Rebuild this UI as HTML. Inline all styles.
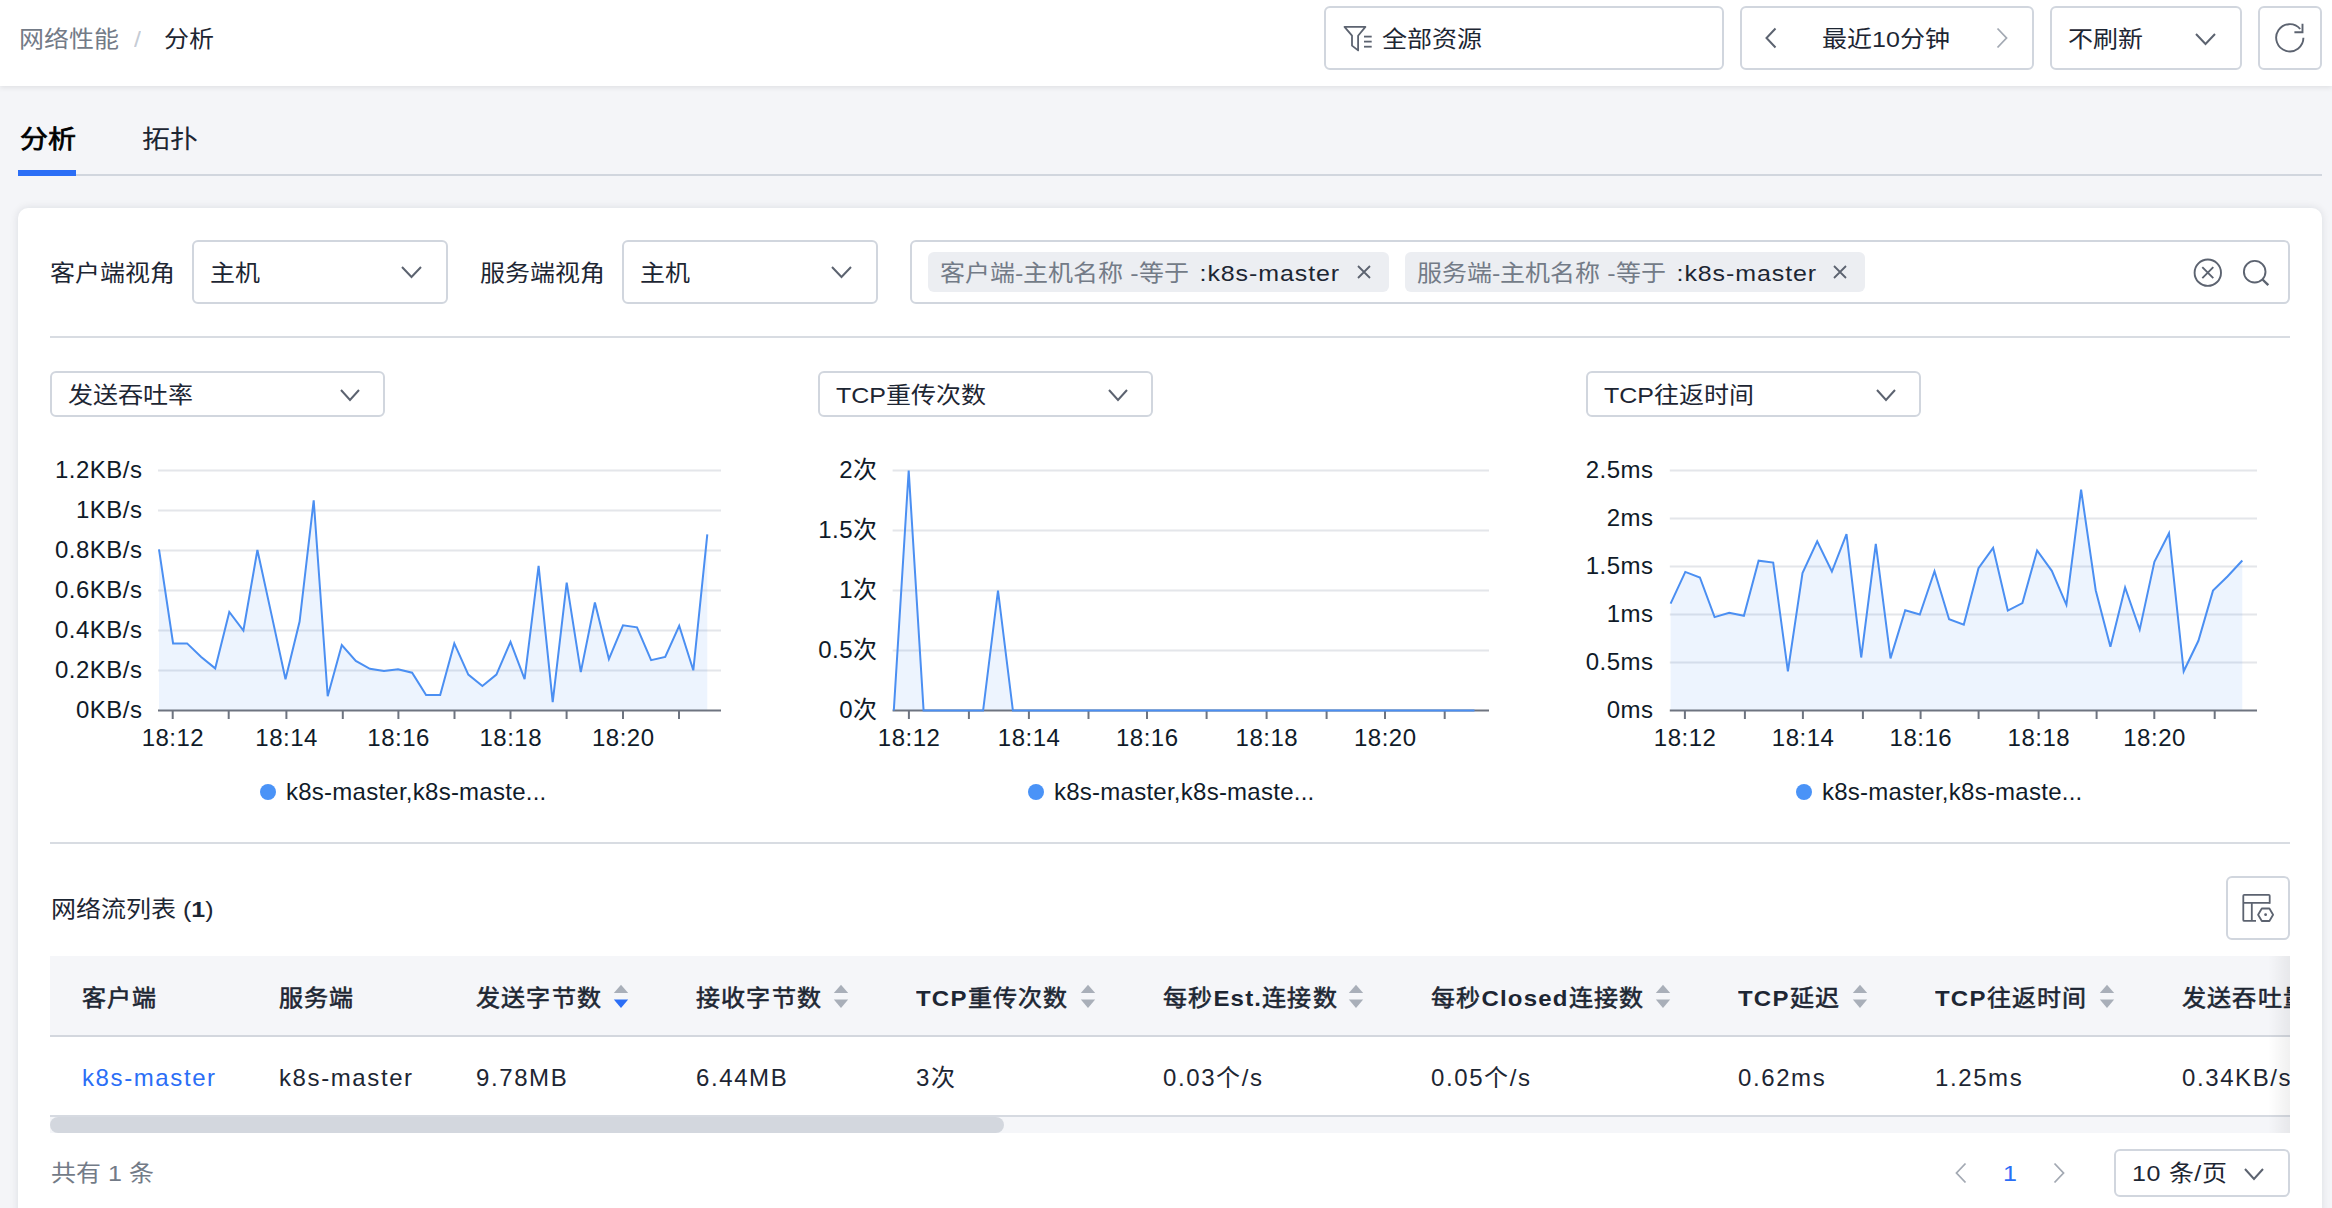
<!DOCTYPE html>
<html lang="zh-CN"><head><meta charset="utf-8">
<style>
*{box-sizing:border-box;margin:0;padding:0}
html,body{width:2332px;height:1208px;overflow:hidden;background:#f4f5f8;font-family:"Liberation Sans",sans-serif;color:#1d2633}
.abs{position:absolute}
.t{position:absolute;white-space:nowrap;font-size:25px;line-height:30px;transform:scaleY(0.91);transform-origin:50% 17px}
.box{position:absolute;border:2px solid #d1d6de;border-radius:6px;background:#fff}
.yl{position:absolute;white-space:nowrap;font-size:24px;line-height:30px;text-align:right;color:#101b29;letter-spacing:0.5px}
.xl{position:absolute;white-space:nowrap;font-size:24px;line-height:30px;width:120px;text-align:center;color:#101b29;letter-spacing:0.5px;text-indent:0.5px}
.lg{position:absolute;white-space:nowrap;font-size:24px;line-height:30px;color:#101b29;letter-spacing:0.25px}
.th b{-webkit-text-stroke:0}
.th{position:absolute;white-space:nowrap;font-size:24px;line-height:30px;font-weight:normal;-webkit-text-stroke:0.6px #1d2633;transform:scaleY(0.945);transform-origin:50% 26px;letter-spacing:1.2px;top:983px}
.td{position:absolute;white-space:nowrap;font-size:24px;line-height:30px;letter-spacing:1.6px;top:1063px}
</style></head><body>
<!-- header -->
<div class="abs" style="left:0;top:0;width:2332px;height:86px;background:#fff;box-shadow:0 2px 5px rgba(0,0,0,0.08)"></div>
<div class="t" style="left:19px;top:24px;color:#737b87">网络性能</div>
<div class="t" style="left:134px;top:24px;color:#c6ccd5">/</div>
<div class="t" style="left:164px;top:24px">分析</div>

<div class="box" style="left:1324px;top:6px;width:400px;height:64px"></div>
<svg class="abs" style="left:1340px;top:22px" width="36" height="32" viewBox="0 0 36 32">
<path d="M4.5 4.9 L25.4 4.9 L18.1 13.7 L18.1 28.4 L12 23.6 L12 13.7 Z" fill="none" stroke="#5c6370" stroke-width="1.8" stroke-linejoin="round"/>
<line x1="24" y1="14.6" x2="31.7" y2="14.6" stroke="#5c6370" stroke-width="1.8"/>
<line x1="24" y1="19.6" x2="31.7" y2="19.6" stroke="#5c6370" stroke-width="1.8"/>
<line x1="24" y1="24.7" x2="31.7" y2="24.7" stroke="#5c6370" stroke-width="1.8"/>
</svg>
<div class="t" style="left:1382px;top:24px">全部资源</div>

<div class="box" style="left:1740px;top:6px;width:294px;height:64px"></div>
<svg class="abs" style="left:1764px;top:27px" width="14" height="22" viewBox="0 0 14 22"><path d="M11.5 1.5 L2.5 11 L11.5 20.5" fill="none" stroke="#5c6370" stroke-width="2"/></svg>
<div class="t" style="left:1822px;top:24px">最近10分钟</div>
<svg class="abs" style="left:1995px;top:27px" width="14" height="22" viewBox="0 0 14 22"><path d="M2.5 1.5 L11.5 11 L2.5 20.5" fill="none" stroke="#a3a9b3" stroke-width="1.8"/></svg>

<div class="box" style="left:2050px;top:6px;width:192px;height:64px"></div>
<div class="t" style="left:2068px;top:24px">不刷新</div>
<svg class="abs" style="left:2194px;top:32px" width="23" height="14" viewBox="0 0 23 14"><path d="M2 2 L11.5 12 L21 2" fill="none" stroke="#5c6370" stroke-width="2"/></svg>

<div class="box" style="left:2258px;top:6px;width:64px;height:64px"></div>
<svg class="abs" style="left:2272px;top:22px" width="36" height="34" viewBox="0 0 36 34">
<path d="M31.4 15.7 A13.6 13.6 0 1 1 28.2 7.0" fill="none" stroke="#5c6370" stroke-width="1.9"/>
<path d="M22.4 10.2 L30.5 10.2 L30.5 1.8" fill="none" stroke="#5c6370" stroke-width="1.9"/>
</svg>

<!-- tabs -->
<div class="t" style="left:19.5px;top:125px;font-size:28px;line-height:30px;-webkit-text-stroke:0.8px #000;color:#000">分析</div>
<div class="t" style="left:141.5px;top:125px;font-size:28px;line-height:30px">拓扑</div>
<div class="abs" style="left:18px;top:174px;width:2304px;height:2px;background:#d1d6de"></div>
<div class="abs" style="left:18px;top:170px;width:58px;height:6px;background:#2b6ef6"></div>

<!-- card -->
<div class="abs" style="left:18px;top:208px;width:2304px;height:1100px;background:#fff;border-radius:10px;box-shadow:0 0 9px rgba(20,30,50,0.11)"></div>

<div class="t" style="left:50px;top:258px">客户端视角</div>
<div class="box" style="left:192px;top:240px;width:256px;height:64px"></div>
<div class="t" style="left:210px;top:258px">主机</div>
<svg class="abs" style="left:400px;top:265px" width="23" height="14" viewBox="0 0 23 14"><path d="M2 2 L11.5 12 L21 2" fill="none" stroke="#5c6370" stroke-width="2"/></svg>

<div class="t" style="left:480px;top:258px">服务端视角</div>
<div class="box" style="left:622px;top:240px;width:256px;height:64px"></div>
<div class="t" style="left:640px;top:258px">主机</div>
<svg class="abs" style="left:830px;top:265px" width="23" height="14" viewBox="0 0 23 14"><path d="M2 2 L11.5 12 L21 2" fill="none" stroke="#5c6370" stroke-width="2"/></svg>

<div class="box" style="left:910px;top:240px;width:1380px;height:64px"></div>
<div class="abs" style="left:928px;top:252px;width:461px;height:40px;background:#eceef2;border-radius:6px"></div>
<div class="t" style="left:940px;top:258px;color:#737b87">客户端-主机名称 -等于 <span style="color:#1d2633;letter-spacing:0.9px;margin-left:4px">:k8s-master</span></div>
<svg class="abs" style="left:1356px;top:264px" width="16" height="16" viewBox="0 0 16 16"><path d="M2 2 L14 14 M14 2 L2 14" stroke="#5c6370" stroke-width="1.8"/></svg>
<div class="abs" style="left:1405px;top:252px;width:460px;height:40px;background:#eceef2;border-radius:6px"></div>
<div class="t" style="left:1417px;top:258px;color:#737b87">服务端-主机名称 -等于 <span style="color:#1d2633;letter-spacing:0.9px;margin-left:4px">:k8s-master</span></div>
<svg class="abs" style="left:1832px;top:264px" width="16" height="16" viewBox="0 0 16 16"><path d="M2 2 L14 14 M14 2 L2 14" stroke="#5c6370" stroke-width="1.8"/></svg>
<svg class="abs" style="left:2190px;top:255px" width="36" height="36" viewBox="0 0 36 36">
<circle cx="17.8" cy="17.7" r="13.2" fill="none" stroke="#5c6370" stroke-width="1.9"/>
<path d="M12.3 12.2 L23.3 23.2 M23.3 12.2 L12.3 23.2" stroke="#5c6370" stroke-width="1.9"/></svg>
<svg class="abs" style="left:2236px;top:254px" width="40" height="40" viewBox="0 0 40 40">
<circle cx="18.7" cy="17.7" r="10.8" fill="none" stroke="#5c6370" stroke-width="1.9"/>
<path d="M26.5 25.5 L32.3 31.2" stroke="#5c6370" stroke-width="2.4"/></svg>

<div class="abs" style="left:50px;top:336px;width:2240px;height:2px;background:#d8dce2"></div>

<!-- chart selects -->
<div class="box" style="left:50px;top:371px;width:335px;height:46px"></div>
<div class="t" style="left:68px;top:380px">发送吞吐率</div>
<svg class="abs" style="left:339px;top:388px" width="22" height="14" viewBox="0 0 22 14"><path d="M2 2 L11.0 12 L20 2" fill="none" stroke="#5c6370" stroke-width="2"/></svg>
<div class="box" style="left:818px;top:371px;width:335px;height:46px"></div>
<div class="t" style="left:836px;top:380px">TCP重传次数</div>
<svg class="abs" style="left:1107px;top:388px" width="22" height="14" viewBox="0 0 22 14"><path d="M2 2 L11.0 12 L20 2" fill="none" stroke="#5c6370" stroke-width="2"/></svg>
<div class="box" style="left:1586px;top:371px;width:335px;height:46px"></div>
<div class="t" style="left:1604px;top:380px">TCP往返时间</div>
<svg class="abs" style="left:1875px;top:388px" width="22" height="14" viewBox="0 0 22 14"><path d="M2 2 L11.0 12 L20 2" fill="none" stroke="#5c6370" stroke-width="2"/></svg>

<svg class="abs" style="left:0;top:0" width="2332" height="1208" viewBox="0 0 2332 1208">
<line x1="158" y1="470.5" x2="721" y2="470.5" stroke="#e4e6ea" stroke-width="2"/>
<line x1="158" y1="510.5" x2="721" y2="510.5" stroke="#e4e6ea" stroke-width="2"/>
<line x1="158" y1="550.5" x2="721" y2="550.5" stroke="#e4e6ea" stroke-width="2"/>
<line x1="158" y1="590.5" x2="721" y2="590.5" stroke="#e4e6ea" stroke-width="2"/>
<line x1="158" y1="630.5" x2="721" y2="630.5" stroke="#e4e6ea" stroke-width="2"/>
<line x1="158" y1="670.5" x2="721" y2="670.5" stroke="#e4e6ea" stroke-width="2"/>
<path d="M159.0,710 L159.0,549.3 L173.1,643.4 L187.1,643.4 L201.2,657.0 L215.2,668.4 L229.3,612.0 L243.4,630.5 L257.4,550.0 L271.5,614.6 L285.5,679.2 L299.6,621.5 L313.7,500.3 L327.7,696.2 L341.8,645.1 L355.8,660.9 L369.9,668.8 L384.0,671.0 L398.0,669.3 L412.1,672.7 L426.1,695.1 L440.2,695.1 L454.3,643.4 L468.3,674.6 L482.4,686.0 L496.4,674.6 L510.5,641.9 L524.6,679.2 L538.6,565.9 L552.7,702.2 L566.7,582.7 L580.8,672.1 L594.9,602.5 L608.9,659.1 L623.0,625.3 L637.0,627.3 L651.1,660.2 L665.2,657.0 L679.2,625.8 L693.3,670.3 L707.3,534.3 L707.3,710 Z" fill="#4b8ff2" fill-opacity="0.1" stroke="none"/>
<line x1="158" y1="710.5" x2="721" y2="710.5" stroke="#6e7480" stroke-width="2"/>
<line x1="172.7" y1="710" x2="172.7" y2="719" stroke="#6e7480" stroke-width="2"/>
<line x1="228.7" y1="710" x2="228.7" y2="719" stroke="#6e7480" stroke-width="2"/>
<line x1="286.4" y1="710" x2="286.4" y2="719" stroke="#6e7480" stroke-width="2"/>
<line x1="342.8" y1="710" x2="342.8" y2="719" stroke="#6e7480" stroke-width="2"/>
<line x1="398.4" y1="710" x2="398.4" y2="719" stroke="#6e7480" stroke-width="2"/>
<line x1="454.5" y1="710" x2="454.5" y2="719" stroke="#6e7480" stroke-width="2"/>
<line x1="510.5" y1="710" x2="510.5" y2="719" stroke="#6e7480" stroke-width="2"/>
<line x1="566.6" y1="710" x2="566.6" y2="719" stroke="#6e7480" stroke-width="2"/>
<line x1="623" y1="710" x2="623" y2="719" stroke="#6e7480" stroke-width="2"/>
<line x1="679" y1="710" x2="679" y2="719" stroke="#6e7480" stroke-width="2"/>
<path d="M159.0,549.3 L173.1,643.4 L187.1,643.4 L201.2,657.0 L215.2,668.4 L229.3,612.0 L243.4,630.5 L257.4,550.0 L271.5,614.6 L285.5,679.2 L299.6,621.5 L313.7,500.3 L327.7,696.2 L341.8,645.1 L355.8,660.9 L369.9,668.8 L384.0,671.0 L398.0,669.3 L412.1,672.7 L426.1,695.1 L440.2,695.1 L454.3,643.4 L468.3,674.6 L482.4,686.0 L496.4,674.6 L510.5,641.9 L524.6,679.2 L538.6,565.9 L552.7,702.2 L566.7,582.7 L580.8,672.1 L594.9,602.5 L608.9,659.1 L623.0,625.3 L637.0,627.3 L651.1,660.2 L665.2,657.0 L679.2,625.8 L693.3,670.3 L707.3,534.3" fill="none" stroke="#4b8ff2" stroke-width="2" stroke-linejoin="miter" stroke-miterlimit="4"/>
<line x1="892.6" y1="470.5" x2="1489" y2="470.5" stroke="#e4e6ea" stroke-width="2"/>
<line x1="892.6" y1="530.5" x2="1489" y2="530.5" stroke="#e4e6ea" stroke-width="2"/>
<line x1="892.6" y1="590.5" x2="1489" y2="590.5" stroke="#e4e6ea" stroke-width="2"/>
<line x1="892.6" y1="650.5" x2="1489" y2="650.5" stroke="#e4e6ea" stroke-width="2"/>
<path d="M893.8,710 L893.8,710.5 L908.7,470.5 L923.6,710.5 L938.5,710.5 L953.4,710.5 L968.2,710.5 L983.1,710.5 L998.0,590.5 L1012.9,710.5 L1027.8,710.5 L1042.7,710.5 L1057.6,710.5 L1072.5,710.5 L1087.4,710.5 L1102.3,710.5 L1117.2,710.5 L1132.0,710.5 L1146.9,710.5 L1161.8,710.5 L1176.7,710.5 L1191.6,710.5 L1206.5,710.5 L1221.4,710.5 L1236.3,710.5 L1251.2,710.5 L1266.0,710.5 L1280.9,710.5 L1295.8,710.5 L1310.7,710.5 L1325.6,710.5 L1340.5,710.5 L1355.4,710.5 L1370.3,710.5 L1385.2,710.5 L1400.1,710.5 L1414.9,710.5 L1429.8,710.5 L1444.7,710.5 L1459.6,710.5 L1474.5,710.5 L1474.5,710 Z" fill="#4b8ff2" fill-opacity="0.1" stroke="none"/>
<line x1="892.6" y1="710.5" x2="1489" y2="710.5" stroke="#6e7480" stroke-width="2"/>
<line x1="908.9" y1="710" x2="908.9" y2="719" stroke="#6e7480" stroke-width="2"/>
<line x1="968.9" y1="710" x2="968.9" y2="719" stroke="#6e7480" stroke-width="2"/>
<line x1="1028.9" y1="710" x2="1028.9" y2="719" stroke="#6e7480" stroke-width="2"/>
<line x1="1088.5" y1="710" x2="1088.5" y2="719" stroke="#6e7480" stroke-width="2"/>
<line x1="1147" y1="710" x2="1147" y2="719" stroke="#6e7480" stroke-width="2"/>
<line x1="1206.6" y1="710" x2="1206.6" y2="719" stroke="#6e7480" stroke-width="2"/>
<line x1="1266.6" y1="710" x2="1266.6" y2="719" stroke="#6e7480" stroke-width="2"/>
<line x1="1326.6" y1="710" x2="1326.6" y2="719" stroke="#6e7480" stroke-width="2"/>
<line x1="1385" y1="710" x2="1385" y2="719" stroke="#6e7480" stroke-width="2"/>
<line x1="1444.7" y1="710" x2="1444.7" y2="719" stroke="#6e7480" stroke-width="2"/>
<path d="M893.8,710.5 L908.7,470.5 L923.6,710.5 L938.5,710.5 L953.4,710.5 L968.2,710.5 L983.1,710.5 L998.0,590.5 L1012.9,710.5 L1027.8,710.5 L1042.7,710.5 L1057.6,710.5 L1072.5,710.5 L1087.4,710.5 L1102.3,710.5 L1117.2,710.5 L1132.0,710.5 L1146.9,710.5 L1161.8,710.5 L1176.7,710.5 L1191.6,710.5 L1206.5,710.5 L1221.4,710.5 L1236.3,710.5 L1251.2,710.5 L1266.0,710.5 L1280.9,710.5 L1295.8,710.5 L1310.7,710.5 L1325.6,710.5 L1340.5,710.5 L1355.4,710.5 L1370.3,710.5 L1385.2,710.5 L1400.1,710.5 L1414.9,710.5 L1429.8,710.5 L1444.7,710.5 L1459.6,710.5 L1474.5,710.5" fill="none" stroke="#4b8ff2" stroke-width="2" stroke-linejoin="miter" stroke-miterlimit="4"/>
<line x1="1669.8" y1="470.5" x2="2257" y2="470.5" stroke="#e4e6ea" stroke-width="2"/>
<line x1="1669.8" y1="518.5" x2="2257" y2="518.5" stroke="#e4e6ea" stroke-width="2"/>
<line x1="1669.8" y1="566.5" x2="2257" y2="566.5" stroke="#e4e6ea" stroke-width="2"/>
<line x1="1669.8" y1="614.5" x2="2257" y2="614.5" stroke="#e4e6ea" stroke-width="2"/>
<line x1="1669.8" y1="662.5" x2="2257" y2="662.5" stroke="#e4e6ea" stroke-width="2"/>
<path d="M1670.6,710 L1670.6,603.7 L1685.3,571.9 L1699.9,577.5 L1714.6,617.1 L1729.2,612.8 L1743.9,615.8 L1758.6,560.7 L1773.2,562.6 L1787.9,671.3 L1802.5,573.0 L1817.2,541.3 L1831.9,571.5 L1846.5,534.2 L1861.2,657.5 L1875.8,543.9 L1890.5,658.4 L1905.2,610.2 L1919.8,614.5 L1934.5,571.3 L1949.1,619.2 L1963.8,624.6 L1978.5,568.2 L1993.1,547.8 L2007.8,610.6 L2022.4,603.1 L2037.1,550.4 L2051.8,570.8 L2066.4,604.8 L2081.1,489.7 L2095.7,590.2 L2110.4,646.8 L2125.1,587.4 L2139.7,629.6 L2154.4,561.8 L2169.0,533.2 L2183.7,671.3 L2198.4,640.8 L2213.0,590.6 L2227.7,576.2 L2242.3,560.5 L2242.3,710 Z" fill="#4b8ff2" fill-opacity="0.1" stroke="none"/>
<line x1="1669.8" y1="710.5" x2="2257" y2="710.5" stroke="#6e7480" stroke-width="2"/>
<line x1="1684.9" y1="710" x2="1684.9" y2="719" stroke="#6e7480" stroke-width="2"/>
<line x1="1744.9" y1="710" x2="1744.9" y2="719" stroke="#6e7480" stroke-width="2"/>
<line x1="1802.9" y1="710" x2="1802.9" y2="719" stroke="#6e7480" stroke-width="2"/>
<line x1="1862.9" y1="710" x2="1862.9" y2="719" stroke="#6e7480" stroke-width="2"/>
<line x1="1920.6" y1="710" x2="1920.6" y2="719" stroke="#6e7480" stroke-width="2"/>
<line x1="1978.6" y1="710" x2="1978.6" y2="719" stroke="#6e7480" stroke-width="2"/>
<line x1="2038.6" y1="710" x2="2038.6" y2="719" stroke="#6e7480" stroke-width="2"/>
<line x1="2096.6" y1="710" x2="2096.6" y2="719" stroke="#6e7480" stroke-width="2"/>
<line x1="2154.3" y1="710" x2="2154.3" y2="719" stroke="#6e7480" stroke-width="2"/>
<line x1="2214.7" y1="710" x2="2214.7" y2="719" stroke="#6e7480" stroke-width="2"/>
<path d="M1670.6,603.7 L1685.3,571.9 L1699.9,577.5 L1714.6,617.1 L1729.2,612.8 L1743.9,615.8 L1758.6,560.7 L1773.2,562.6 L1787.9,671.3 L1802.5,573.0 L1817.2,541.3 L1831.9,571.5 L1846.5,534.2 L1861.2,657.5 L1875.8,543.9 L1890.5,658.4 L1905.2,610.2 L1919.8,614.5 L1934.5,571.3 L1949.1,619.2 L1963.8,624.6 L1978.5,568.2 L1993.1,547.8 L2007.8,610.6 L2022.4,603.1 L2037.1,550.4 L2051.8,570.8 L2066.4,604.8 L2081.1,489.7 L2095.7,590.2 L2110.4,646.8 L2125.1,587.4 L2139.7,629.6 L2154.4,561.8 L2169.0,533.2 L2183.7,671.3 L2198.4,640.8 L2213.0,590.6 L2227.7,576.2 L2242.3,560.5" fill="none" stroke="#4b8ff2" stroke-width="2" stroke-linejoin="miter" stroke-miterlimit="4"/>
<circle cx="268" cy="792" r="8" fill="#4a93f7"/>
<circle cx="1036" cy="792" r="8" fill="#4a93f7"/>
<circle cx="1804" cy="792" r="8" fill="#4a93f7"/>
</svg>
<div class="yl" style="right:2189.5px;top:454.5px">1.2KB/s</div>
<div class="yl" style="right:2189.5px;top:494.5px">1KB/s</div>
<div class="yl" style="right:2189.5px;top:534.5px">0.8KB/s</div>
<div class="yl" style="right:2189.5px;top:574.5px">0.6KB/s</div>
<div class="yl" style="right:2189.5px;top:614.5px">0.4KB/s</div>
<div class="yl" style="right:2189.5px;top:654.5px">0.2KB/s</div>
<div class="yl" style="right:2189.5px;top:694.5px">0KB/s</div><div class="yl" style="right:1454.5px;top:454.5px">2次</div>
<div class="yl" style="right:1454.5px;top:514.5px">1.5次</div>
<div class="yl" style="right:1454.5px;top:574.5px">1次</div>
<div class="yl" style="right:1454.5px;top:634.5px">0.5次</div>
<div class="yl" style="right:1454.5px;top:694.5px">0次</div><div class="yl" style="right:678.5px;top:454.5px">2.5ms</div>
<div class="yl" style="right:678.5px;top:502.5px">2ms</div>
<div class="yl" style="right:678.5px;top:550.5px">1.5ms</div>
<div class="yl" style="right:678.5px;top:598.5px">1ms</div>
<div class="yl" style="right:678.5px;top:646.5px">0.5ms</div>
<div class="yl" style="right:678.5px;top:694.5px">0ms</div>
<div class="xl" style="left:112.69999999999999px;top:723px">18:12</div>
<div class="xl" style="left:226.39999999999998px;top:723px">18:14</div>
<div class="xl" style="left:338.4px;top:723px">18:16</div>
<div class="xl" style="left:450.5px;top:723px">18:18</div>
<div class="xl" style="left:563px;top:723px">18:20</div><div class="xl" style="left:848.9px;top:723px">18:12</div>
<div class="xl" style="left:968.9000000000001px;top:723px">18:14</div>
<div class="xl" style="left:1087px;top:723px">18:16</div>
<div class="xl" style="left:1206.6px;top:723px">18:18</div>
<div class="xl" style="left:1325px;top:723px">18:20</div><div class="xl" style="left:1624.9px;top:723px">18:12</div>
<div class="xl" style="left:1742.9px;top:723px">18:14</div>
<div class="xl" style="left:1860.6px;top:723px">18:16</div>
<div class="xl" style="left:1978.6px;top:723px">18:18</div>
<div class="xl" style="left:2094.3px;top:723px">18:20</div>
<div class="lg" style="left:286px;top:777px">k8s-master,k8s-maste...</div>
<div class="lg" style="left:1054px;top:777px">k8s-master,k8s-maste...</div>
<div class="lg" style="left:1822px;top:777px">k8s-master,k8s-maste...</div>

<div class="abs" style="left:50px;top:842px;width:2240px;height:2px;background:#d8dce2"></div>

<!-- table -->
<div class="t" style="left:51px;top:894px">网络流列表 (<b>1</b>)</div>
<div class="box" style="left:2226px;top:876px;width:64px;height:64px"></div>
<svg class="abs" style="left:2236px;top:886px" width="44" height="44" viewBox="0 0 44 44">
<path d="M20 34.9 L8.3 34.9 Q7.3 34.9 7.3 33.9 L7.3 9.8 Q7.3 8.8 8.3 8.8 L32.7 8.8 Q33.7 8.8 33.7 9.8 L33.7 17.8" fill="none" stroke="#5c6370" stroke-width="1.8"/>
<path d="M7.3 16.9 L33.7 16.9 M15.8 16.9 L15.8 34.9" fill="none" stroke="#5c6370" stroke-width="1.8"/>
<path d="M25.8 22.5 L33.4 22.5 L37.1 28.7 L33.4 35 L25.8 35 L22.1 28.7 Z" fill="none" stroke="#5c6370" stroke-width="1.8" stroke-linejoin="round"/>
<circle cx="29.6" cy="28.7" r="1.4" fill="#5c6370"/>
</svg>
<div class="abs" style="left:50px;top:956px;width:2240px;height:81px;background:#f5f6f9;border-bottom:2px solid #d3d7de"></div>
<div class="abs" style="left:50px;top:1037px;width:2240px;height:80px;background:#fff;border-bottom:2px solid #d6dae1"></div>
<div class="abs" style="left:50px;top:1117px;width:2240px;height:16px;background:#f5f6f9"></div>
<div class="abs" style="left:50px;top:1117px;width:954px;height:16px;background:#d3d7de;border-radius:8px"></div>

<div class="th" style="left:82px">客户端</div>
<div class="th" style="left:279px">服务端</div>
<div class="th" style="left:476px">发送字节数</div><svg class="abs" style="left:613px;top:984px" width="16" height="26" viewBox="0 0 16 26"><path d="M8 0.8 L15.2 9 L0.8 9 Z" fill="#a9afb9"/><path d="M0.8 15.5 L15.2 15.5 L8 24 Z" fill="#2b6ef6"/></svg>
<div class="th" style="left:696px">接收字节数</div><svg class="abs" style="left:833px;top:984px" width="16" height="26" viewBox="0 0 16 26"><path d="M8 0.8 L15.2 9 L0.8 9 Z" fill="#a9afb9"/><path d="M0.8 15.5 L15.2 15.5 L8 24 Z" fill="#a9afb9"/></svg>
<div class="th" style="left:916px"><b>TCP</b>重传次数</div><svg class="abs" style="left:1080px;top:984px" width="16" height="26" viewBox="0 0 16 26"><path d="M8 0.8 L15.2 9 L0.8 9 Z" fill="#a9afb9"/><path d="M0.8 15.5 L15.2 15.5 L8 24 Z" fill="#a9afb9"/></svg>
<div class="th" style="left:1163px">每秒<b>Est.</b>连接数</div><svg class="abs" style="left:1348px;top:984px" width="16" height="26" viewBox="0 0 16 26"><path d="M8 0.8 L15.2 9 L0.8 9 Z" fill="#a9afb9"/><path d="M0.8 15.5 L15.2 15.5 L8 24 Z" fill="#a9afb9"/></svg>
<div class="th" style="left:1431px">每秒<b>Closed</b>连接数</div><svg class="abs" style="left:1655px;top:984px" width="16" height="26" viewBox="0 0 16 26"><path d="M8 0.8 L15.2 9 L0.8 9 Z" fill="#a9afb9"/><path d="M0.8 15.5 L15.2 15.5 L8 24 Z" fill="#a9afb9"/></svg>
<div class="th" style="left:1738px"><b>TCP</b>延迟</div><svg class="abs" style="left:1852px;top:984px" width="16" height="26" viewBox="0 0 16 26"><path d="M8 0.8 L15.2 9 L0.8 9 Z" fill="#a9afb9"/><path d="M0.8 15.5 L15.2 15.5 L8 24 Z" fill="#a9afb9"/></svg>
<div class="th" style="left:1935px"><b>TCP</b>往返时间</div><svg class="abs" style="left:2099px;top:984px" width="16" height="26" viewBox="0 0 16 26"><path d="M8 0.8 L15.2 9 L0.8 9 Z" fill="#a9afb9"/><path d="M0.8 15.5 L15.2 15.5 L8 24 Z" fill="#a9afb9"/></svg>
<div class="abs" style="left:2182px;top:956px;width:108px;height:160px;overflow:hidden">
<div class="th" style="left:0;top:27px">发送吞吐量</div>
<div class="td" style="left:0;top:107px">0.34KB/s</div>
</div>
<div class="abs" style="left:2268px;top:956px;width:22px;height:177px;background:linear-gradient(to right,rgba(0,0,0,0),rgba(0,0,0,0.06))"></div>

<div class="td" style="left:82px;color:#2b6ef6">k8s-master</div>
<div class="td" style="left:279px">k8s-master</div>
<div class="td" style="left:476px">9.78MB</div>
<div class="td" style="left:696px">6.44MB</div>
<div class="td" style="left:916px">3次</div>
<div class="td" style="left:1163px">0.03个/s</div>
<div class="td" style="left:1431px">0.05个/s</div>
<div class="td" style="left:1738px">0.62ms</div>
<div class="td" style="left:1935px">1.25ms</div>

<div class="t" style="left:51px;top:1158px;color:#737b87">共有 1 条</div>
<svg class="abs" style="left:1954px;top:1162px" width="14" height="22" viewBox="0 0 14 22"><path d="M11.5 1.5 L2.5 11 L11.5 20.5" fill="none" stroke="#a3a9b3" stroke-width="1.8"/></svg>
<div class="t" style="left:2003px;top:1158px;color:#2b6ef6">1</div>
<svg class="abs" style="left:2052px;top:1162px" width="14" height="22" viewBox="0 0 14 22"><path d="M2.5 1.5 L11.5 11 L2.5 20.5" fill="none" stroke="#a3a9b3" stroke-width="1.8"/></svg>
<div class="box" style="left:2114px;top:1149px;width:176px;height:48px"></div>
<div class="t" style="left:2132px;top:1158px;letter-spacing:0.6px">10 条/页</div>
<svg class="abs" style="left:2243px;top:1167px" width="22" height="14" viewBox="0 0 22 14"><path d="M2 2 L11.0 12 L20 2" fill="none" stroke="#5c6370" stroke-width="2"/></svg>
</body></html>
